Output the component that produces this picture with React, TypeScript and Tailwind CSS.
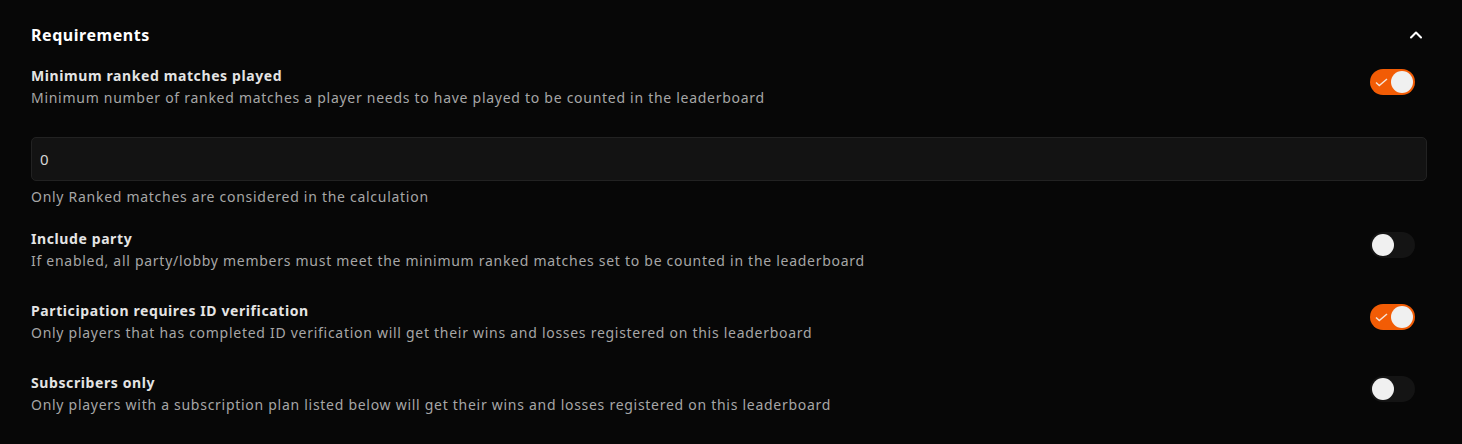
import React, { useState } from 'react';
import { ChevronUp } from 'lucide-react';

type Setting = {
  id: string;
  title: string;
  desc: string;
  on: boolean;
};

const settings: Setting[] = [
  {
    id: 'party',
    title: 'Include party',
    desc: 'If enabled, all party/lobby members must meet the minimum ranked matches set to be counted in the leaderboard',
    on: false,
  },
  {
    id: 'idv',
    title: 'Participation requires ID verification',
    desc: 'Only players that has completed ID verification will get their wins and losses registered on this leaderboard',
    on: true,
  },
  {
    id: 'subs',
    title: 'Subscribers only',
    desc: 'Only players with a subscription plan listed below will get their wins and losses registered on this leaderboard',
    on: false,
  },
];

function Toggle({ on, onChange }: { on: boolean; onChange: () => void }) {
  return (
    <button
      type="button"
      onClick={onChange}
      className={
        'relative mt-[4px] mr-[12px] h-[26px] w-[45px] shrink-0 rounded-full ' +
        (on ? 'bg-[#f25c05]' : 'bg-[#141414]')
      }
    >
      {on && (
        <svg
          className="absolute left-[5px] top-[9px]"
          width="13"
          height="9"
          viewBox="0 0 13 9"
          fill="none"
        >
          <path d="M1 4.5 4.3 7.6 12 1" stroke="#f6e3d6" strokeWidth="1.5" />
        </svg>
      )}
      <span
        className={
          'absolute top-[2px] h-[22px] w-[22px] rounded-full bg-[#f0f0f0] ' +
          (on ? 'left-[21px]' : 'left-[2px]')
        }
      />
    </button>
  );
}

function SettingText({ title, desc }: { title: string; desc: string }) {
  return (
    <div className="flex flex-col">
      <span className="text-[14px] leading-[22px] font-bold tracking-[0.6px] text-[#e4e4e4]">{title}</span>
      <span className="text-[14px] leading-[22px] tracking-[0.72px] text-[#a6a6a6]">{desc}</span>
    </div>
  );
}

export default function App() {
  const [minOn, setMinOn] = useState(true);
  const [state, setState] = useState<Record<string, boolean>>(
    Object.fromEntries(settings.map((s) => [s.id, s.on]))
  );

  return (
    <div
      className="min-h-screen bg-[#070707] pl-[31px] pr-[35px] pt-[23px]"
      style={{ fontFamily: '"Noto Sans", sans-serif' }}
    >
      <div className="flex items-center justify-between">
        <h2 className="text-[16px] leading-[24px] font-bold tracking-[0.55px] text-white">Requirements</h2>
        <ChevronUp size={20} strokeWidth={2.5} className="mr-[1px] text-white" />
      </div>

      <div className="mt-[18px] flex justify-between">
        <SettingText
          title="Minimum ranked matches played"
          desc="Minimum number of ranked matches a player needs to have played to be counted in the leaderboard"
        />
        <Toggle on={minOn} onChange={() => setMinOn(!minOn)} />
      </div>

      <input
        defaultValue="0"
        className="mt-[28px] block h-[44px] w-full rounded-[5px] border border-[#222222] bg-[#131313] px-[8px] text-[15px] text-[#d6d6d6] outline-none"
      />
      <p className="mt-[5px] text-[14px] leading-[22px] tracking-[0.72px] text-[#a6a6a6]">
        Only Ranked matches are considered in the calculation
      </p>

      <div className="mt-[20px] flex flex-col gap-[28px]">
        {settings.map((s) => (
          <div key={s.id} className="flex justify-between">
            <SettingText title={s.title} desc={s.desc} />
            <Toggle
              on={state[s.id]}
              onChange={() => setState({ ...state, [s.id]: !state[s.id] })}
            />
          </div>
        ))}
      </div>
    </div>
  );
}
